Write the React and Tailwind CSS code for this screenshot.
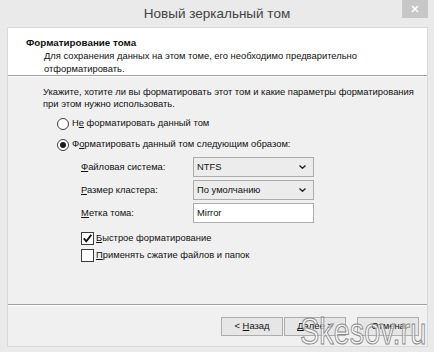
import { useState } from 'react';

function U({ children }) {
    return <span className="underline underline-offset-[1px]">{children}</span>;
}

function Radio({ checked, children }) {
    return (
        <div className="flex items-center h-[13px]">
            <span className="w-[12px] h-[12px] rounded-full border border-[#3c3c3c] bg-white flex items-center justify-center">
                {checked && <span className="w-[6px] h-[6px] rounded-full bg-[#1a1a1a]" />}
            </span>
            <span className="ml-[3px]">{children}</span>
        </div>
    );
}

function Check({ checked, children }) {
    return (
        <div className="flex items-center h-[13px]">
            <span className="w-[13px] h-[13px] border border-[#3c3c3c] bg-white flex items-center justify-center">
                {checked && (
                    <svg width="11" height="11" viewBox="0 0 11 11">
                        <path d="M1.8 5.3 L4.3 8.3 L9.3 1.8" fill="none" stroke="#111" strokeWidth="1.9" />
                    </svg>
                )}
            </span>
            <span className="ml-[2px]">{children}</span>
        </div>
    );
}

function Combo({ value }) {
    return (
        <div className="w-[121px] h-[20px] border border-[#acacac] bg-[#ececec] flex items-center justify-between pl-[3px] pr-[7px]">
            <span>{value}</span>
            <svg width="7" height="4" viewBox="0 0 7 4">
                <path d="M0.5 0.5 L3.5 3.3 L6.5 0.5" fill="none" stroke="#222" strokeWidth="1.3" />
            </svg>
        </div>
    );
}

function Btn({ children }) {
    return (
        <div className="w-[62px] h-[19px] border border-[#adadad] bg-[#e6e6e6] flex items-center justify-center">
            {children}
        </div>
    );
}

export default function App() {
    const [label] = useState('Mirror');

    return (
        <div className="relative w-[434px] h-[352px] bg-[#eaeaea] text-[9.4px] text-[#111] font-['Liberation_Sans',Arial,sans-serif] overflow-hidden flex flex-col">
            {/* Title bar */}
            <div className="h-[27px] shrink-0 relative flex items-center justify-center">
                <span className="text-[13.5px] text-[#444] pt-[2px]">Новый зеркальный том</span>
                <div className="absolute right-[6px] top-0 w-[26px] h-[18px] bg-[#c7c7c7] flex items-center justify-center">
                    <svg width="8" height="8" viewBox="0 0 8 8">
                        <path d="M1 1 L7 7 M7 1 L1 7" stroke="#fff" strokeWidth="1.6" />
                    </svg>
                </div>
            </div>

            {/* Content box */}
            <div className="ml-[7px] w-[421px] h-[320px] border border-[#d9d9d9] flex flex-col">
                {/* Header */}
                <div className="h-[47px] bg-white pl-[18px] pt-[8px] shrink-0">
                    <div className="font-bold leading-[13px] text-[9.8px]">Форматирование тома</div>
                    <div className="pl-[18px] leading-[13px]">
                        Для сохранения данных на этом томе, его необходимо предварительно
                        <br />
                        отформатировать.
                    </div>
                </div>
                <div className="h-px bg-[#a0a0a0]" />
                <div className="h-px bg-white" />

                {/* Body */}
                <div className="flex-1 bg-[#f0f0f0] pl-[35px] pt-[9px]">
                    <div className="leading-[12px]">
                        Укажите, хотите ли вы форматировать этот том и какие параметры форматирования
                        <br />
                        при этом нужно использовать.
                    </div>

                    <div className="pl-[14px] mt-[7px] flex flex-col gap-[8px]">
                        <Radio>Н<U>е</U> форматировать данный том</Radio>
                        <Radio checked>Ф<U>о</U>рматировать данный том следующим образом:</Radio>
                    </div>

                    <div className="pl-[38px] mt-[6px] flex flex-col gap-[3px]">
                        <div className="flex items-center">
                            <span className="w-[112px]"><U>Ф</U>айловая система:</span>
                            <Combo value="NTFS" />
                        </div>
                        <div className="flex items-center">
                            <span className="w-[112px]"><U>Р</U>азмер кластера:</span>
                            <Combo value="По умолчанию" />
                        </div>
                        <div className="flex items-center">
                            <span className="w-[112px]"><U>М</U>етка тома:</span>
                            <div className="w-[121px] h-[20px] border border-[#abadb3] bg-white flex items-center pl-[3px]">{label}</div>
                        </div>
                    </div>

                    <div className="pl-[38px] mt-[9px] flex flex-col gap-[4px]">
                        <Check checked><U>Б</U>ыстрое форматирование</Check>
                        <Check><U>П</U>рименять сжатие файлов и папок</Check>
                    </div>
                </div>

                <div className="h-px bg-[#a0a0a0]" />
                <div className="h-px bg-white" />

                {/* Footer */}
                <div className="h-[40px] shrink-0 bg-[#f0f0f0] flex items-start justify-end pt-[11px] pr-[8px]">
                    <Btn>&lt;&nbsp;<U>Н</U>азад</Btn>
                    <div className="ml-[1px]"><Btn><U>Д</U>алее&nbsp;&gt;</Btn></div>
                    <div className="ml-[11px]"><Btn>Отмена</Btn></div>
                </div>
            </div>

            {/* Watermark */}
            <div className="absolute left-[300px] top-[313px] text-[37px] leading-none origin-left scale-x-[0.78] font-['Liberation_Sans',sans-serif] text-white/60 [-webkit-text-stroke:1px_#8a8a8a] pointer-events-none">
                Skesov.ru
            </div>
        </div>
    );
}
